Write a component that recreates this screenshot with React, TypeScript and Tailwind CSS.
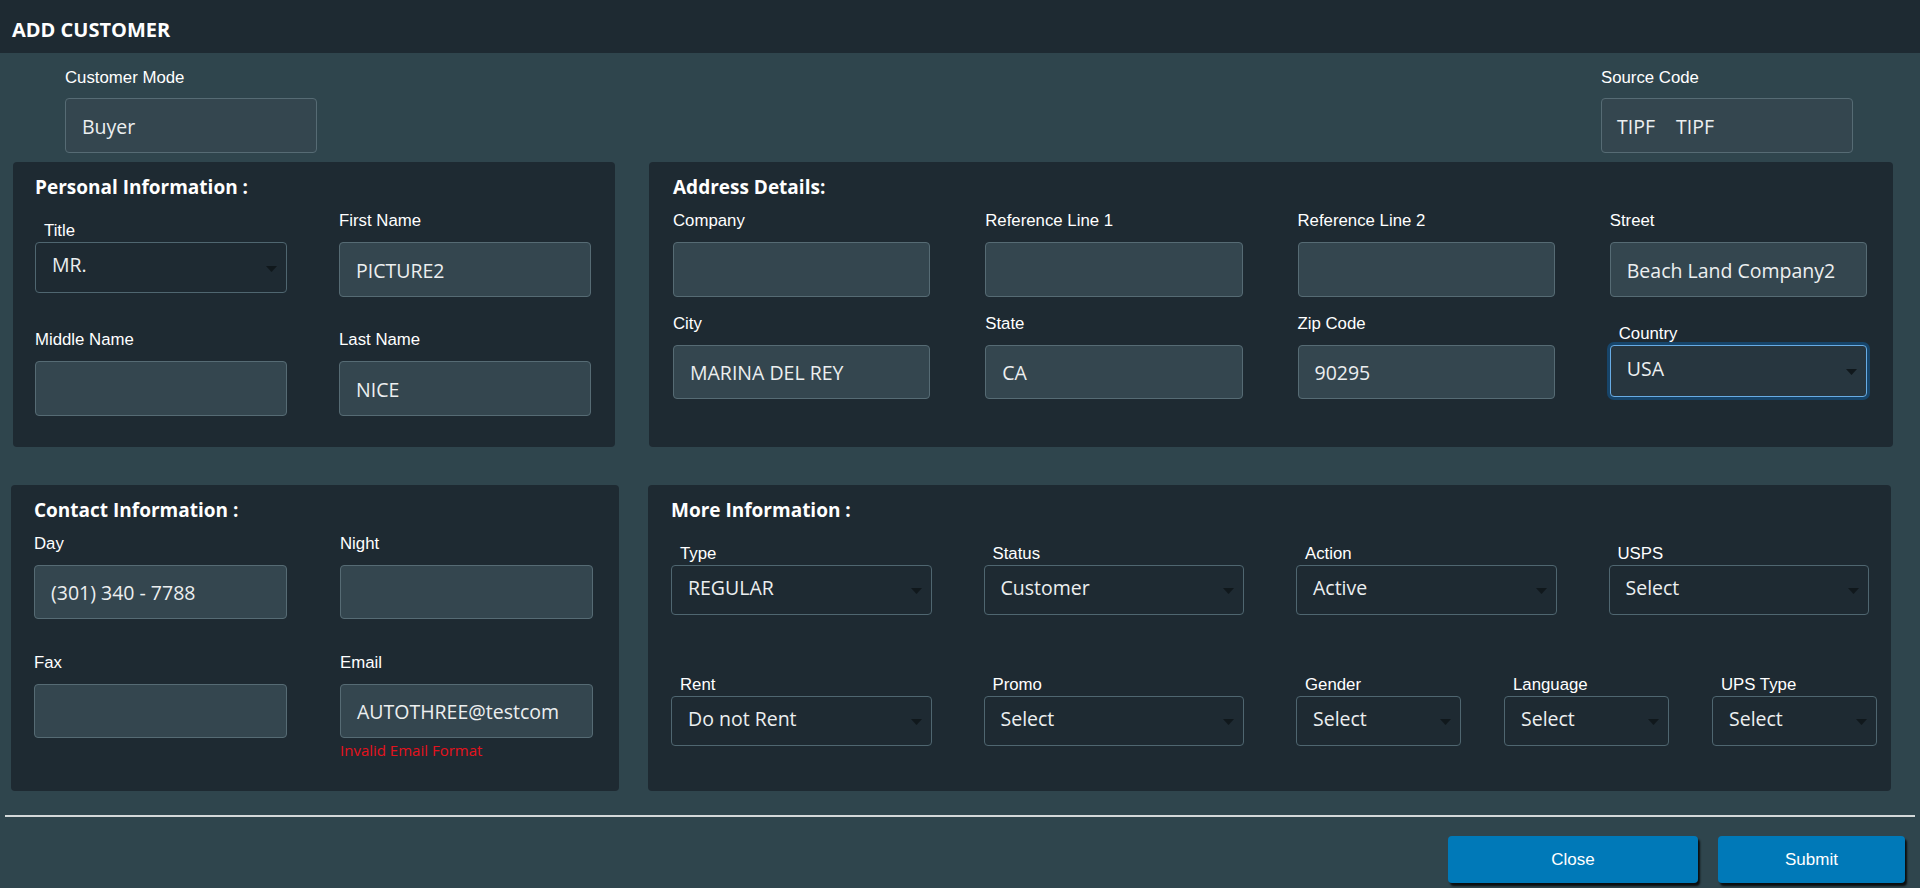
import React from "react";

const labelCls = "font-['Liberation_Sans',Arial,sans-serif] text-[16.8px] leading-[20px] text-white whitespace-nowrap";
const valueCls = "font-['Open_Sans','Noto_Sans',sans-serif] text-[19.5px] leading-[26px] text-[#eceff0] whitespace-nowrap";
const headingCls = "font-['Open_Sans','Noto_Sans',sans-serif] font-bold text-[19px] leading-[24px] text-white whitespace-nowrap";

type TextFieldProps = {
  label: string;
  value?: string;
  h?: string;
  error?: string;
  className?: string;
};

function TextField({ label, value = "", h = "h-[55px]", error, className = "" }: TextFieldProps) {
  return (
    <div className={className}>
      <div className={`${labelCls} mb-[11px]`}>{label}</div>
      <div className={`${h} rounded-[4px] border border-[#566b74] bg-[#34464f] flex items-center pl-[16px] pt-[2px] ${valueCls}`}>
        {value}
      </div>
      {error && (
        <div className="mt-[2px] font-['Open_Sans','Noto_Sans',sans-serif] text-[15px] leading-[20px] text-[#e5121d]">
          {error}
        </div>
      )}
    </div>
  );
}

type SelectFieldProps = {
  label: string;
  value: string;
  h?: string;
  focused?: boolean;
  className?: string;
};

function Arrow() {
  return (
    <svg width="11" height="6" viewBox="0 0 11 6" className="absolute right-[9px] top-1/2 -translate-y-1/2 mt-[1px]">
      <polygon points="0,0 11,0 5.5,6" fill="#10181c" />
    </svg>
  );
}

function SelectField({ label, value, h = "h-[50px]", focused, className = "" }: SelectFieldProps) {
  const box = focused
    ? "border-[#68ace4] bg-[#27363f] ring-[3px] ring-[#17456a]"
    : "border-[#4f6670] bg-[#1e2a32]";
  return (
    <div className={className}>
      <div className={`${labelCls} mt-[10px] mb-[1px] pl-[9px]`}>{label}</div>
      <div className={`${h} relative rounded-[4px] border ${box} flex items-center pl-[16px] pb-[5px] ${valueCls}`}>
        {value}
        <Arrow />
      </div>
    </div>
  );
}

export default function App() {
  return (
    <div className="w-[1920px] h-[888px] overflow-hidden bg-[#2f454d]">
      {/* header */}
      <div className="h-[53px] bg-[#1e2a32] flex items-center pl-[12px] pt-[6px]">
        <h1 className="font-['Open_Sans','Noto_Sans',sans-serif] font-bold text-[20px] leading-[24px] text-white">
          ADD CUSTOMER
        </h1>
      </div>

      {/* customer mode / source code */}
      <div className="flex justify-between pl-[65px] pr-[67px] pt-[15px]">
        <div className="w-[252px]">
          <div className={`${labelCls} mb-[10px]`}>Customer Mode</div>
          <div className={`h-[55px] rounded-[4px] border border-[#566b74] bg-[#34464f] flex items-center pl-[16px] pt-[2px] ${valueCls}`}>
            Buyer
          </div>
        </div>
        <div className="w-[252px]">
          <div className={`${labelCls} mb-[10px]`}>Source Code</div>
          <div className={`h-[55px] rounded-[4px] border border-[#566b74] bg-[#34464f] flex items-center pl-[15px] pt-[2px] ${valueCls}`}>
            <span>TIPF</span>
            <span className="ml-[21px]">TIPF</span>
          </div>
        </div>
      </div>

      {/* personal + address */}
      <div className="flex gap-[34px] pl-[13px] pr-[27px] mt-[9px] h-[285px]">
        <section className="w-[602px] rounded-[4px] bg-[#1e2a32] pt-[13px] pl-[22px] pr-[24px]">
          <h2 className={headingCls}>Personal Information :</h2>
          <div className="mt-[12px] grid grid-cols-2 gap-x-[52px] gap-y-[33px] items-start">
            <SelectField label="Title" value="MR." h="h-[51px]" />
            <TextField label="First Name" value="PICTURE2" />
            <TextField label="Middle Name" />
            <TextField label="Last Name" value="NICE" />
          </div>
        </section>

        <section className="flex-1 rounded-[4px] bg-[#1e2a32] pt-[13px] pl-[24px] pr-[26px]">
          <h2 className={headingCls}>Address Details:</h2>
          <div className="mt-[12px] grid grid-cols-4 gap-x-[55px] gap-y-[17px] items-start">
            <TextField label="Company" />
            <TextField label="Reference Line 1" />
            <TextField label="Reference Line 2" />
            <TextField label="Street" value="Beach Land Company2" />
            <TextField label="City" value="MARINA DEL REY" h="h-[54px]" />
            <TextField label="State" value="CA" h="h-[54px]" />
            <TextField label="Zip Code" value="90295" h="h-[54px]" />
            <SelectField label="Country" value="USA" h="h-[52px]" focused />
          </div>
        </section>
      </div>

      {/* contact + more */}
      <div className="flex gap-[29px] pl-[11px] pr-[29px] mt-[38px] h-[306px]">
        <section className="w-[608px] rounded-[4px] bg-[#1e2a32] pt-[13px] pl-[23px] pr-[26px]">
          <h2 className={headingCls}>Contact Information :</h2>
          <div className="mt-[12px] grid grid-cols-2 gap-x-[53px] gap-y-[34px] items-start">
            <TextField label="Day" value="(301) 340 - 7788" h="h-[54px]" />
            <TextField label="Night" h="h-[54px]" />
            <TextField label="Fax" h="h-[54px]" />
            <TextField label="Email" value="AUTOTHREE@testcom" h="h-[54px]" error="Invalid Email Format" />
          </div>
        </section>

        <section className="flex-1 rounded-[4px] bg-[#1e2a32] pt-[13px] pl-[23px] pr-[22px]">
          <h2 className={headingCls}>More Information :</h2>
          <div className="mt-[12px] grid grid-cols-4 gap-x-[52px] gap-y-[50px] items-start">
            <SelectField label="Type" value="REGULAR" />
            <SelectField label="Status" value="Customer" />
            <SelectField label="Action" value="Active" />
            <SelectField label="USPS" value="Select" />
            <SelectField label="Rent" value="Do not Rent" />
            <SelectField label="Promo" value="Select" />
            <div className="col-span-2 flex gap-[43px]">
              <SelectField label="Gender" value="Select" className="w-[165px] shrink-0" />
              <SelectField label="Language" value="Select" className="w-[165px] shrink-0" />
              <SelectField label="UPS Type" value="Select" className="w-[165px] shrink-0" />
            </div>
          </div>
        </section>
      </div>

      {/* divider */}
      <div className="mt-[24px] mx-[5px] h-[2px] bg-[#d4d8d9]" />

      {/* actions */}
      <div className="mt-[19px] flex justify-end gap-[20px] pr-[15px]">
        <button className="w-[250px] h-[47px] rounded-[4px] bg-[#0079b8] shadow-[2px_3px_2px_rgba(0,0,0,0.8)] font-['Liberation_Sans',Arial,sans-serif] text-[17px] text-white">
          Close
        </button>
        <button className="w-[187px] h-[47px] rounded-[4px] bg-[#0079b8] shadow-[2px_3px_2px_rgba(0,0,0,0.8)] font-['Liberation_Sans',Arial,sans-serif] text-[17px] text-white">
          Submit
        </button>
      </div>
    </div>
  );
}
